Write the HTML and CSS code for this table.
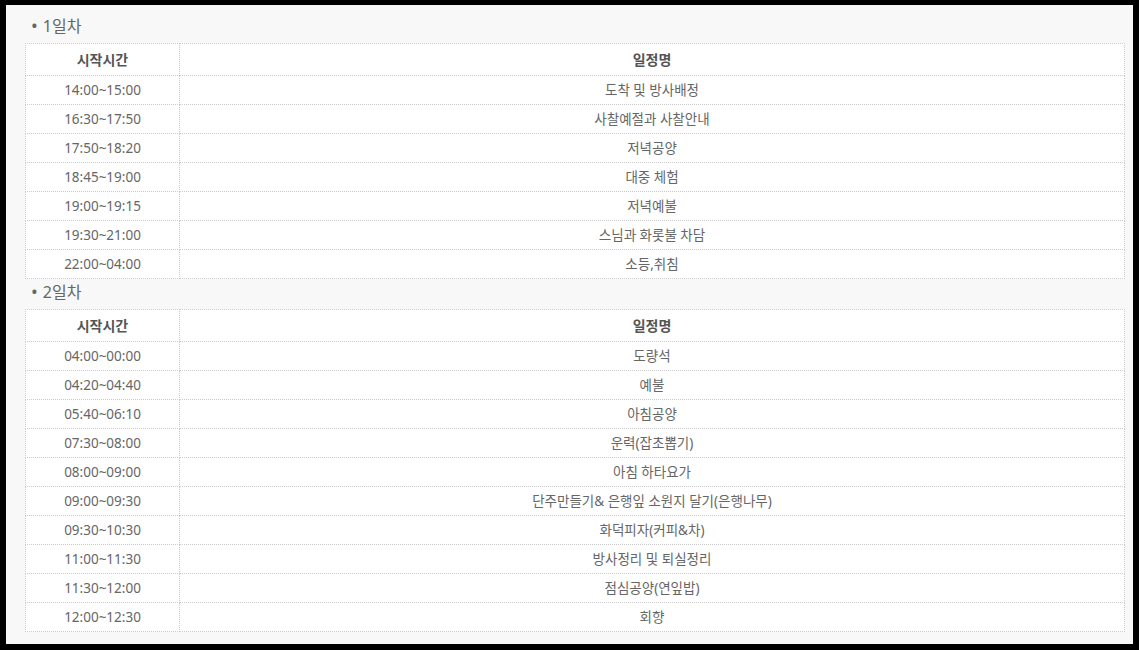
FILE: index.html
```html
<!DOCTYPE html>
<html lang="ko">
<head>
    <meta charset="UTF-8">
    <title>일정표</title>
    <link rel="stylesheet" href="styles.css">
</head>
<body>
    <div class="frame">
        <div class="schedule">
            <h3 class="day first">1일차</h3>
            <table class="plan">
                <thead>
                    <tr><th class="time">시작시간</th><th>일정명</th></tr>
                </thead>
                <tbody>
                    <tr><td>14:00~15:00</td><td>도착 및 방사배정</td></tr>
                    <tr><td>16:30~17:50</td><td>사찰예절과 사찰안내</td></tr>
                    <tr><td>17:50~18:20</td><td>저녁공양</td></tr>
                    <tr><td>18:45~19:00</td><td>대중 체험</td></tr>
                    <tr><td>19:00~19:15</td><td>저녁예불</td></tr>
                    <tr><td>19:30~21:00</td><td>스님과 화롯불 차담</td></tr>
                    <tr><td>22:00~04:00</td><td>소등,취침</td></tr>
                </tbody>
            </table>

            <h3 class="day">2일차</h3>
            <table class="plan">
                <thead>
                    <tr><th class="time">시작시간</th><th>일정명</th></tr>
                </thead>
                <tbody>
                    <tr><td>04:00~00:00</td><td>도량석</td></tr>
                    <tr><td>04:20~04:40</td><td>예불</td></tr>
                    <tr><td>05:40~06:10</td><td>아침공양</td></tr>
                    <tr><td>07:30~08:00</td><td>운력(잡초뽑기)</td></tr>
                    <tr><td>08:00~09:00</td><td>아침 하타요가</td></tr>
                    <tr><td>09:00~09:30</td><td>단주만들기&amp; 은행잎 소원지 달기(은행나무)</td></tr>
                    <tr><td>09:30~10:30</td><td>화덕피자(커피&amp;차)</td></tr>
                    <tr><td>11:00~11:30</td><td>방사정리 및 퇴실정리</td></tr>
                    <tr><td>11:30~12:00</td><td>점심공양(연잎밥)</td></tr>
                    <tr><td>12:00~12:30</td><td>회향</td></tr>
                </tbody>
            </table>
        </div>
    </div>
</body>
</html>
```

FILE: styles.css
```css
html, body {
    margin: 0;
    padding: 0;
}
body {
    font-family: "Noto Sans", "Noto Sans CJK KR", sans-serif;
    color: #666;
    background: #000;
}
.frame {
    width: 1139px;
    height: 650px;
    box-sizing: border-box;
    border: 6px solid #000;
    border-top-width: 5px;
    background: #f8f8f8;
    overflow: hidden;
}
.schedule {
    padding: 0 8px 0 19px;
}
.day {
    margin: 0;
    height: 25px;
    line-height: 25px;
    padding: 0 0 5px 6px;
    font-size: 16px;
    font-weight: normal;
    color: #666;
}
.day.first {
    padding-top: 8px;
}
.day::before {
    content: "•";
    margin-right: 5px;
    font-size: 18px;
    color: #666;
}
.plan {
    width: 100%;
    border-collapse: collapse;
    background: #fff;
    font-size: 13.5px;
}
.plan th,
.plan td {
    border: 1px dotted #ccc;
    text-align: center;
    padding: 0;
    height: 28px;
    line-height: 28px;
}
.plan th {
    height: 31px;
    font-weight: bold;
    color: #555;
    font-size: 14px;
}
.plan .time {
    width: 153px;
}
```
